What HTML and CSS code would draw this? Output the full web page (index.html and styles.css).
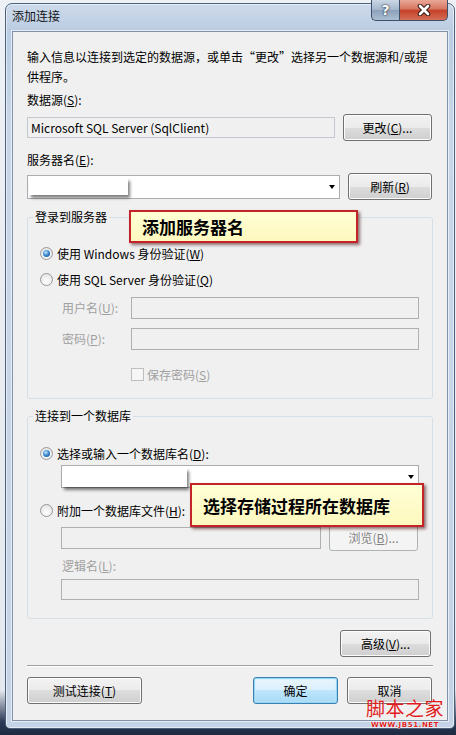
FILE: index.html
```html
<!DOCTYPE html>
<html lang="zh-CN">

<head>
    <meta charset="UTF-8">
    <title>添加连接</title>
    <link rel="stylesheet" href="styles.css">
</head>

<body>
    <div class="window">
        <div class="titlebar">
            <span class="title">添加连接</span>
            <div class="caption-btns">
                <span class="cap help">?</span>
                <span class="cap close">
                    <svg width="16" height="12" viewBox="0 0 16 12">
                        <path d="M4 2 L12 10 M12 2 L4 10" stroke="#3a1d18" stroke-width="4.6" stroke-linecap="round" />
                        <path d="M4 2 L12 10 M12 2 L4 10" stroke="#fff" stroke-width="2.6" stroke-linecap="round" />
                    </svg>
                </span>
            </div>
        </div>

        <div class="client">
            <p class="desc">输入信息以连接到选定的数据源，或单击“更改”选择另一个数据源和/或提<br>供程序。</p>

            <div class="label">数据源(<u>S</u>):</div>
            <div class="row row-src">
                <div class="textbox readonly">Microsoft SQL Server (SqlClient)</div>
                <button class="btn btn-change">更改(<u>C</u>)...</button>
            </div>

            <div class="label label-server">服务器名(<u>E</u>):</div>
            <div class="row row-server">
                <div class="combo combo-server">
                    <span class="mask mask-server"></span>
                    <span class="arrow"></span>
                </div>
                <button class="btn btn-refresh">刷新(<u>R</u>)</button>
            </div>

            <fieldset class="group group-login">
                <legend>登录到服务器</legend>
                <div class="radio-row">
                    <span class="radio checked"><span class="dot"></span></span>
                    <span>使用 Windows 身份验证(<u>W</u>)</span>
                </div>
                <div class="radio-row">
                    <span class="radio"></span>
                    <span>使用 SQL Server 身份验证(<u>Q</u>)</span>
                </div>
                <div class="field-row">
                    <span class="field-label disabled">用户名(<u>U</u>):</span>
                    <div class="input disabled-box"></div>
                </div>
                <div class="field-row field-pass">
                    <span class="field-label disabled">密码(<u>P</u>):</span>
                    <div class="input disabled-box"></div>
                </div>
                <div class="check-row">
                    <span class="checkbox"></span>
                    <span class="disabled">保存密码(<u>S</u>)</span>
                </div>
            </fieldset>

            <fieldset class="group group-db">
                <legend>连接到一个数据库</legend>
                <div class="radio-row radio-short">
                    <span class="radio checked"><span class="dot"></span></span>
                    <span>选择或输入一个数据库名(<u>D</u>):</span>
                </div>
                <div class="combo combo-db">
                    <span class="mask mask-db"></span>
                    <span class="arrow"></span>
                </div>
                <div class="radio-row radio-short radio-attach">
                    <span class="radio"></span>
                    <span>附加一个数据库文件(<u>H</u>):</span>
                </div>
                <div class="file-row">
                    <div class="input disabled-box file-input"></div>
                    <button class="btn btn-disabled btn-browse">浏览(<u>B</u>)...</button>
                </div>
                <div class="sub-label disabled">逻辑名(<u>L</u>):</div>
                <div class="input disabled-box logic-input"></div>
            </fieldset>

            <div class="adv-row">
                <button class="btn btn-adv">高级(<u>V</u>)...</button>
            </div>

            <div class="sep"></div>

            <div class="footer">
                <button class="btn btn-test">测试连接(<u>T</u>)</button>
                <button class="btn btn-default btn-ok">确定</button>
                <button class="btn btn-cancel">取消</button>
            </div>

            <!-- annotations pasted on top of the screenshot -->
            <div class="callout callout-server">添加服务器名</div>
            <div class="callout callout-db">选择存储过程所在数据库</div>
        </div>
    </div>

    <div class="watermark">
        <div class="wm-name">脚本之家</div>
        <div class="wm-url">WWW.JB51.NET</div>
    </div>
</body>

</html>
```

FILE: styles.css
```css
body {
    margin: 0;
    width: 456px;
    height: 735px;
    overflow: hidden;
    position: relative;
    background: linear-gradient(#eef1f5 0, #e4e9ef 690px, #2b3a56 722px, #1d2a40 100%);
    font-family: "Noto Sans CJK SC", sans-serif;
    font-size: 12px;
    color: rgb(0, 0, 0);
}

u {
    text-underline-offset: 1px;
}

button {
    font: inherit;
}

/* window frame */

.window {
    margin: 3px 0 0 5px;
    width: 450px;
    height: 726px;
    box-sizing: border-box;
    border: 1px solid rgb(77, 96, 124);
    border-radius: 7px 7px 5px 5px;
    padding: 0 6px 7px;
    background: linear-gradient(180deg, rgb(205, 218, 234) 0, rgb(186, 204, 226) 28px, rgb(199, 214, 232) 120px, rgb(196, 211, 229) 100%);
    box-shadow: inset 0 0 0 1px rgba(255, 255, 255, 0.55);
    display: flex;
    flex-direction: column;
}

.titlebar {
    height: 27px;
    display: flex;
    align-items: flex-start;
}

.title {
    line-height: 24px;
    color: rgb(20, 20, 20);
}

.caption-btns {
    margin-left: auto;
    margin-top: -4px;
    display: flex;
}

.cap {
    height: 21px;
    box-sizing: border-box;
    border: 1px solid rgb(62, 79, 105);
    border-top: none;
    display: flex;
    align-items: center;
    justify-content: center;
}

.help {
    width: 28px;
    border-right: none;
    border-radius: 0 0 0 5px;
    background: linear-gradient(rgb(203, 215, 229), rgb(164, 182, 204) 50%, rgb(139, 160, 186) 50%, rgb(171, 190, 210));
    color: rgb(255, 255, 255);
    font-family: "DejaVu Sans", sans-serif;
    font-weight: bold;
    font-size: 14px;
    line-height: 1;
    text-shadow: 0 0 2px rgb(30, 40, 60), 0 0 1px rgb(30, 40, 60);
}

.close {
    width: 49px;
    border-radius: 0 0 5px 0;
    background: linear-gradient(rgb(233, 168, 150), rgb(214, 118, 95) 45%, rgb(196, 65, 42) 52%, rgb(214, 110, 86) 100%);
}

/* client area */

.client {
    flex: 1;
    position: relative;
    box-sizing: border-box;
    background: rgb(240, 240, 240);
    border: 1px solid rgb(128, 145, 168);
    box-shadow: 0 0 0 1px rgba(255, 255, 255, 0.6);
    padding: 15px 14px 14px;
    display: flex;
    flex-direction: column;
}

.desc {
    margin: 0;
    line-height: 20px;
}

.label {
    line-height: 20px;
    margin-top: 3px;
}

.label-server {
    margin-top: 9px;
}

.row {
    display: flex;
    align-items: center;
    gap: 8px;
    height: 27px;
}

.row-src {
    margin-top: 4px;
}

.row-server {
    margin-top: 3px;
}

.textbox {
    width: 308px;
    height: 21px;
    box-sizing: border-box;
    border: 1px solid rgb(196, 200, 206);
    background: rgb(240, 240, 240);
    line-height: 19px;
    padding-left: 3px;
    white-space: nowrap;
}

.combo {
    height: 24px;
    box-sizing: border-box;
    border: 1px solid rgb(171, 173, 179);
    background: rgb(255, 255, 255);
    display: flex;
    align-items: center;
}

.combo-server {
    width: 313px;
}

.arrow {
    margin-left: auto;
    margin-right: 4px;
    width: 0;
    height: 0;
    border-left: 3.5px solid transparent;
    border-right: 3.5px solid transparent;
    border-top: 4px solid rgb(0, 0, 0);
}

.mask {
    background: rgb(255, 255, 255);
    box-shadow: 2px 3px 3px rgba(0, 0, 0, 0.5);
    align-self: flex-start;
}

.mask-server {
    margin: 2px 0 0 1px;
    width: 99px;
    height: 17px;
}

.mask-db {
    margin: 2px 0 0 0;
    width: 125px;
    height: 19px;
}

/* buttons */

.btn {
    height: 27px;
    box-sizing: border-box;
    padding: 0;
    border: 1px solid rgb(112, 112, 112);
    border-radius: 3px;
    background: linear-gradient(rgb(242, 242, 242), rgb(235, 235, 235) 50%, rgb(221, 221, 221) 50%, rgb(207, 207, 207));
    box-shadow: inset 0 0 0 1px rgb(252, 252, 252);
    color: rgb(0, 0, 0);
    line-height: 25px;
}

.btn-change {
    width: 89px;
}

.btn-refresh {
    width: 84px;
}

.btn-disabled {
    border-color: rgb(173, 178, 181);
    background: rgb(244, 244, 244);
    box-shadow: none;
    color: rgb(131, 131, 131);
}

.btn-default {
    border-color: rgb(60, 127, 177);
    background: linear-gradient(rgb(234, 246, 253), rgb(217, 240, 252) 50%, rgb(190, 230, 253) 50%, rgb(167, 217, 245));
    box-shadow: inset 0 0 0 1px rgb(148, 214, 246), inset 0 0 2px 1px rgb(198, 236, 252);
}

/* group boxes */

.group {
    margin: 9px 0 0;
    border: 1px solid rgb(213, 223, 229);
    border-radius: 3px;
    min-inline-size: 0;
}

.group legend {
    margin-left: -7px;
    padding: 0 2px;
    line-height: 16px;
}

.group-login {
    padding: 15px 13px 14px 12px;
}

.group-db {
    padding: 17px 13px 18px 12px;
}

.radio-row {
    display: flex;
    align-items: center;
    gap: 4px;
    height: 26px;
}

.radio-short {
    height: 24px;
}

.radio-attach {
    margin-top: 10px;
}

.radio {
    width: 13px;
    height: 13px;
    box-sizing: border-box;
    border-radius: 50%;
    border: 1px solid rgb(150, 152, 155);
    background: radial-gradient(circle at 50% 70%, rgb(255, 255, 255), rgb(222, 222, 222));
    display: flex;
    align-items: center;
    justify-content: center;
}

.radio .dot {
    width: 7px;
    height: 7px;
    border-radius: 50%;
    background: radial-gradient(circle at 40% 35%, rgb(190, 228, 255), rgb(45, 124, 196) 55%, rgb(18, 78, 140));
}

.field-row {
    display: flex;
    align-items: center;
    margin: 5px 0 0 22px;
}

.field-pass {
    margin-top: 9px;
}

.field-label {
    width: 69px;
    line-height: 20px;
}

.disabled {
    color: rgb(160, 160, 160);
}

.input {
    height: 22px;
    box-sizing: border-box;
}

.field-row .input {
    flex: 1;
}

.disabled-box {
    border: 1px solid rgb(175, 175, 175);
    background: rgb(240, 240, 240);
}

.check-row {
    display: flex;
    align-items: center;
    gap: 3px;
    height: 20px;
    margin: 14px 0 0 91px;
}

.checkbox {
    width: 13px;
    height: 13px;
    box-sizing: border-box;
    border: 1px solid rgb(190, 190, 190);
    background: rgb(246, 246, 246);
}

.combo-db {
    height: 23px;
    margin-left: 21px;
}

.file-row {
    display: flex;
    align-items: center;
    gap: 8px;
    height: 27px;
    margin: 2px 0 0 21px;
}

.file-input {
    width: 260px;
}

.btn-browse {
    width: 89px;
}

.sub-label {
    margin: 5px 0 0 22px;
    line-height: 20px;
}

.logic-input {
    height: 21px;
    margin: 3px 0 0 21px;
}

/* bottom part */

.adv-row {
    display: flex;
    justify-content: flex-end;
    margin-top: 11px;
    padding-right: 2px;
}

.btn-adv {
    width: 91px;
}

.sep {
    margin-top: 8px;
    border-top: 1px solid rgb(160, 160, 160);
    border-bottom: 1px solid rgb(255, 255, 255);
}

.footer {
    display: flex;
    gap: 9px;
    margin-top: 10px;
    padding-right: 1px;
}

.btn-test {
    width: 115px;
    margin-right: auto;
}

.btn-ok,
.btn-cancel {
    width: 85px;
}

/* yellow notes */

.callout {
    position: absolute;
    box-sizing: border-box;
    border: 2px solid rgb(196, 36, 40);
    background: linear-gradient(rgb(255, 255, 214), rgb(253, 248, 190));
    box-shadow: 2px 2px 3px rgba(60, 0, 0, 0.55);
    font-weight: bold;
    font-size: 17px;
    display: flex;
    align-items: center;
    padding-left: 11px;
    white-space: nowrap;
}

.callout-server {
    left: 116px;
    top: 178px;
    width: 229px;
    height: 33px;
}

.callout-db {
    left: 177px;
    top: 451px;
    width: 234px;
    height: 44px;
}

/* site watermark */

.watermark {
    position: absolute;
    left: 366px;
    top: 698px;
    width: 78px;
    text-align: center;
}

.wm-name {
    color: rgb(226, 28, 30);
    font-size: 19px;
    line-height: 20px;
    letter-spacing: 0.5px;
}

.wm-url {
    margin-top: 3px;
    color: rgb(220, 30, 30);
    font-family: "DejaVu Sans", sans-serif;
    font-weight: bold;
    font-size: 7px;
    line-height: 8px;
    letter-spacing: 0.6px;
    text-shadow: 0 0 1px rgb(255, 255, 255), 0 0 1px rgb(255, 255, 255);
}
```
